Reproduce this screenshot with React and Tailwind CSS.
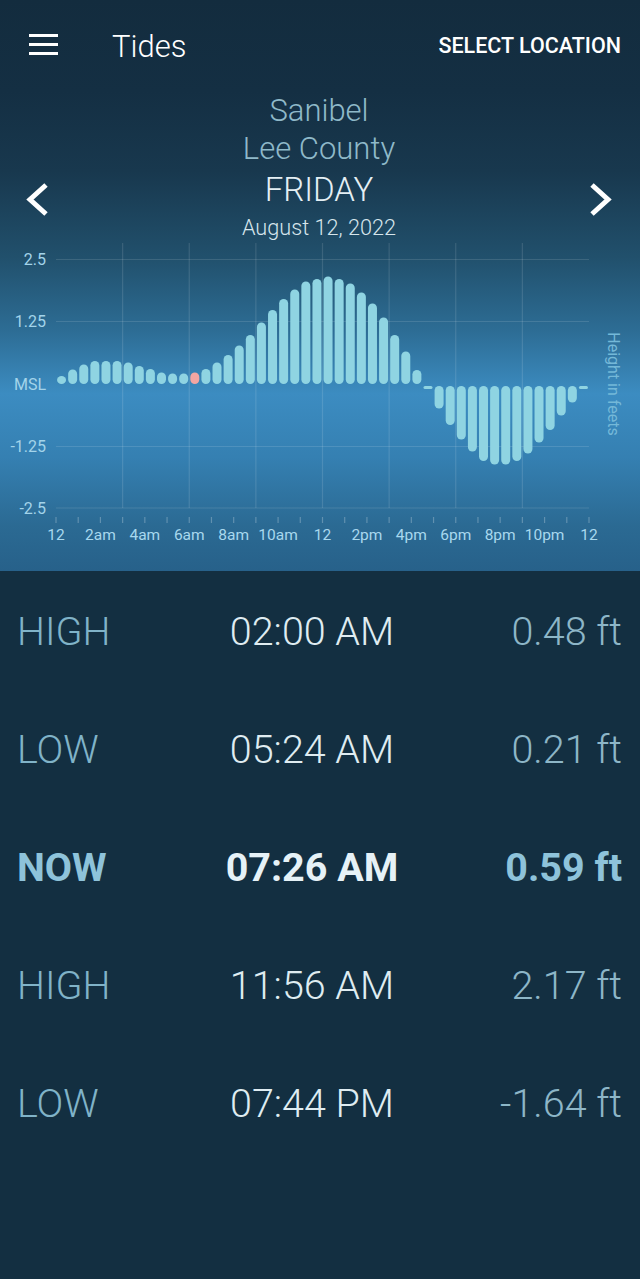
import React from "react";

const BARS = [0.16,0.29,0.39,0.46,0.46,0.46,0.43,0.36,0.30,0.23,0.21,0.21,0.23,0.30,0.43,0.58,0.77,0.98,1.23,1.48,1.70,1.89,2.05,2.10,2.15,2.10,2.01,1.83,1.61,1.33,0.98,0.65,0.28,-0.04,-0.49,-0.82,-1.11,-1.35,-1.54,-1.61,-1.61,-1.54,-1.39,-1.17,-0.92,-0.63,-0.37,-0.05];

const X0 = 56;
const X1 = 589;
const HOUR = (X1 - X0) / 24;
const BASE = 384;
const PX = 50;

function Chart() {
  const yTicks = [
    { l: "2.5", y: 259.5 },
    { l: "1.25", y: 321.5 },
    { l: "MSL", y: 384 },
    { l: "-1.25", y: 446.5 },
    { l: "-2.5", y: 508 },
  ];
  const xLabels = ["12", "2am", "4am", "6am", "8am", "10am", "12", "2pm", "4pm", "6pm", "8pm", "10pm", "12"];
  return (
    <svg width="640" height="328" viewBox="0 243 640 328" className="block">
      {[259.5, 321.5, 446.5, 508].map((y) => (
        <line key={y} x1={X0} x2={X1} y1={y} y2={y} stroke="rgba(255,255,255,0.12)" strokeWidth="1.2" />
      ))}
      {[1, 2, 3, 4, 5, 6, 7].map((k) => {
        const x = X0 + HOUR * 3 * k;
        return <line key={k} x1={x} x2={x} y1={243} y2={508} stroke="rgba(255,255,255,0.12)" strokeWidth="1.2" />;
      })}
      {Array.from({ length: 25 }).map((_, h) => {
        const x = X0 + HOUR * h;
        return <line key={h} x1={x} x2={x} y1={517} y2={523} stroke="rgba(255,255,255,0.25)" strokeWidth="1.2" />;
      })}
      {yTicks.map((t) => (
        <text key={t.l} x={46} y={t.y} textAnchor="end" dominantBaseline="central" fontSize="16" fill="#a3d4ea">
          {t.l}
        </text>
      ))}
      {xLabels.map((l, i) => (
        <text key={i} x={X0 + HOUR * 2 * i} y={534.5} textAnchor="middle" dominantBaseline="central" fontSize="15.5" fill="#a8d8ee">
          {l}
        </text>
      ))}
      {BARS.map((v, i) => {
        const cx = X0 + HOUR / 2 * (i + 0.5);
        const fill = i === 12 ? "#f3a6a2" : "#8fd4e2";
        if (v >= 0) {
          const h = Math.max(v * PX, 8);
          return <rect key={i} x={cx - 4.5} y={BASE - h} width="9" height={h} rx="4.5" fill={fill} />;
        }
        const h = Math.max(-v * PX - 2, 3);
        return <rect key={i} x={cx - 4.5} y={BASE + 2} width="9" height={h} rx={h < 9 ? 1.5 : 4.5} fill={fill} />;
      })}
      <text
        x={613}
        y={384}
        transform="rotate(90 613 384)"
        textAnchor="middle"
        dominantBaseline="central"
        fontSize="16"
        fill="#74b8d8"
      >
        Height in feets
      </text>
    </svg>
  );
}

function Chevron({ dir }) {
  return (
    <svg width="24" height="36" viewBox="0 0 24 36">
      {dir === "left" ? (
        <polyline points="20,3 4,17.5 20,32" fill="none" stroke="#ffffff" strokeWidth="5" strokeLinejoin="miter" />
      ) : (
        <polyline points="4,3 20,17.5 4,32" fill="none" stroke="#ffffff" strokeWidth="5" strokeLinejoin="miter" />
      )}
    </svg>
  );
}

const ROWS = [
  { l: "HIGH", t: "02:00 AM", v: "0.48 ft" },
  { l: "LOW", t: "05:24 AM", v: "0.21 ft" },
  { l: "NOW", t: "07:26 AM", v: "0.59 ft", now: true },
  { l: "HIGH", t: "11:56 AM", v: "2.17 ft" },
  { l: "LOW", t: "07:44 PM", v: "-1.64 ft" },
];

export default function App() {
  return (
    <div className="w-[640px] h-[1279px] bg-[#132f41] font-[Roboto,sans-serif] overflow-hidden">
      <div className="h-[571px] bg-[linear-gradient(to_bottom,#132c3e_0%,#142f43_16%,#18384e_30%,#21506c_45%,#2d6d95_58%,#3c8cc1_69%,#3580b2_80%,#2b6a93_92%,#27618a_100%)]">
        <div className="h-[92px] flex items-center">
          <div className="ml-[29px] w-[29px] flex flex-col gap-[6px] mb-[4px]">
            <div className="h-[3px] bg-white" />
            <div className="h-[3px] bg-white" />
            <div className="h-[3px] bg-white" />
          </div>
          <div className="ml-[54px] text-[31px] font-light text-white leading-none">Tides</div>
          <div className="ml-auto mr-[19px] text-[21.5px] font-medium text-white leading-none">
            SELECT LOCATION
          </div>
        </div>
        <div className="flex h-[151px]">
          <div className="ml-[26px] mt-[90px] self-start">
            <Chevron dir="left" />
          </div>
          <div className="flex-1 flex flex-col items-center">
            <div className="h-[38px] leading-[38px] text-[31px] font-light text-[#8fb9c9]">Sanibel</div>
            <div className="h-[37px] leading-[37px] text-[31px] font-light text-[#8fb9c9]">Lee County</div>
            <div className="h-[46px] leading-[46px] text-[33px] font-light text-[#e4eff4]">FRIDAY</div>
            <div className="h-[30px] leading-[30px] text-[21.7px] font-light text-[#d6e5ec]">August 12, 2022</div>
          </div>
          <div className="mr-[28px] mt-[90px] self-start">
            <Chevron dir="right" />
          </div>
        </div>
        <Chart />
      </div>
      <div className="pt-[2px]">
        {ROWS.map((r, i) => (
          <div
            key={i}
            className={`h-[118px] grid grid-cols-[200px_190px_1fr] items-center pl-[17px] pr-[18px] text-[39.5px] leading-none ${
              r.now ? "font-bold" : "font-light"
            }`}
          >
            <div className={r.now ? "text-[#8ec3da]" : "text-[#80b3c8]"}>{r.l}</div>
            <div className={`text-center whitespace-nowrap ${r.now ? "text-[#e6f2f7]" : "text-[#dfecf1]"}`}>{r.t}</div>
            <div className={`text-right ${r.now ? "text-[#8ec3da]" : "text-[#8db6c7]"}`}>{r.v}</div>
          </div>
        ))}
      </div>
    </div>
  );
}
